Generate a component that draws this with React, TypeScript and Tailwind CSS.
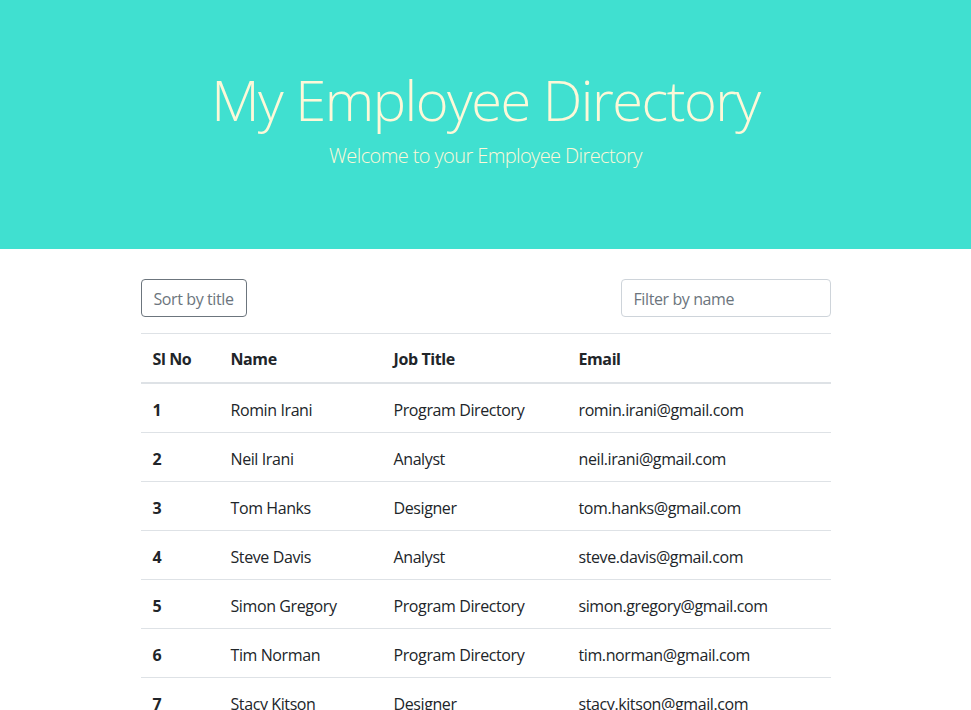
import { useState } from "react";

const employees = [
  { id: 1, name: "Romin Irani", title: "Program Directory", email: "romin.irani@gmail.com" },
  { id: 2, name: "Neil Irani", title: "Analyst", email: "neil.irani@gmail.com" },
  { id: 3, name: "Tom Hanks", title: "Designer", email: "tom.hanks@gmail.com" },
  { id: 4, name: "Steve Davis", title: "Analyst", email: "steve.davis@gmail.com" },
  { id: 5, name: "Simon Gregory", title: "Program Directory", email: "simon.gregory@gmail.com" },
  { id: 6, name: "Tim Norman", title: "Program Directory", email: "tim.norman@gmail.com" },
  { id: 7, name: "Stacy Kitson", title: "Designer", email: "stacy.kitson@gmail.com" },
];

export default function App() {
  const [filter, setFilter] = useState("");
  const [sorted, setSorted] = useState(false);

  let rows = employees.filter((e) =>
    e.name.toLowerCase().includes(filter.toLowerCase())
  );
  if (sorted) rows = [...rows].sort((a, b) => a.title.localeCompare(b.title));

  return (
    <div className="min-h-screen bg-white text-[#212529] font-['Open_Sans',sans-serif] tracking-[-0.4px]">
      {/* Jumbotron */}
      <div className="bg-[#40e0d0] pt-[66px] pb-[62px] mb-[30px] text-center text-[#fdf8d8]">
        <h1 className="text-[56px] leading-[1.2] font-light mb-2 tracking-[-1.5px]">
          My Employee Directory
        </h1>
        <p className="text-[20px] leading-[1.5] font-light mb-4 tracking-[-0.6px]">
          Welcome to your Employee Directory
        </p>
      </div>

      <div className="w-[720px] mx-auto px-[15px]">
        {/* Controls */}
        <div className="flex items-center justify-between mb-4">
          <button
            onClick={() => setSorted(!sorted)}
            className="h-[38px] px-3 pt-[2px] border border-[#6c757d] rounded text-base leading-6 text-[#6c757d]"
          >
            Sort by title
          </button>
          <input
            value={filter}
            onChange={(e) => setFilter(e.target.value)}
            placeholder="Filter by name"
            className="w-[210px] h-[38px] px-3 pt-[2px] border border-[#ced4da] rounded text-base leading-6 placeholder:text-[#6c757d] outline-none"
          />
        </div>

        {/* Table */}
        <table className="w-full table-fixed border-collapse text-base leading-6">
          <thead>
            <tr className="border-t border-[#dee2e6] border-b-2">
              <th className="w-[78px] px-3 pt-[13px] pb-[11px] text-left font-bold">Sl No</th>
              <th className="w-[163px] px-3 pt-[13px] pb-[11px] text-left font-bold">Name</th>
              <th className="w-[185px] px-3 pt-[13px] pb-[11px] text-left font-bold">Job Title</th>
              <th className="px-3 pt-[13px] pb-[11px] text-left font-bold">Email</th>
            </tr>
          </thead>
          <tbody>
            {rows.map((e) => (
              <tr key={e.id} className="border-t border-[#dee2e6]">
                <th className="px-3 pt-[14px] pb-[10px] text-left font-bold">{e.id}</th>
                <td className="px-3 pt-[14px] pb-[10px]">{e.name}</td>
                <td className="px-3 pt-[14px] pb-[10px]">{e.title}</td>
                <td className="px-3 pt-[14px] pb-[10px]">{e.email}</td>
              </tr>
            ))}
          </tbody>
        </table>
      </div>
    </div>
  );
}
